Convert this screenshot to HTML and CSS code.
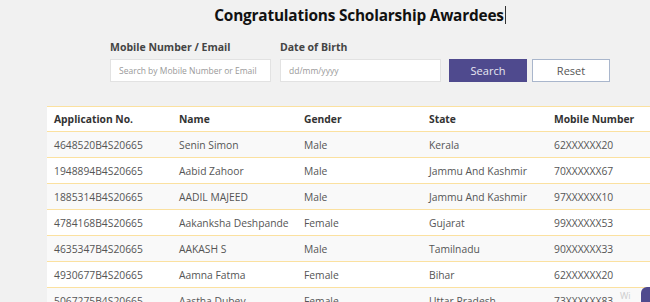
FILE: index.html
```html
<!DOCTYPE html>
<html>
<head>
<meta charset="utf-8">
<link rel="stylesheet" href="styles.css">
</head>
<body>
<div class="page">
  <h1 class="title">Congratulations Scholarship Awardees<span class="caret"></span></h1>
  <div class="filters">
    <div class="field">
      <label class="label">Mobile Number / Email</label>
      <input class="input" type="text" placeholder="Search by Mobile Number or Email">
    </div>
    <div class="field">
      <label class="label">Date of Birth</label>
      <input class="input" type="text" placeholder="dd/mm/yyyy">
    </div>
    <div class="buttons">
      <button class="btn btn-search">Search</button>
      <button class="btn btn-reset">Reset</button>
    </div>
  </div>
  <table class="table">
    <thead>
      <tr><th>Application No.</th><th>Name</th><th>Gender</th><th>State</th><th>Mobile Number</th></tr>
    </thead>
    <tbody>
      <tr><td>4648520B4S20665</td><td>Senin Simon</td><td>Male</td><td>Kerala</td><td>62XXXXXX20</td></tr>
      <tr><td>1948894B4S20665</td><td>Aabid Zahoor</td><td>Male</td><td>Jammu And Kashmir</td><td>70XXXXXX67</td></tr>
      <tr><td>1885314B4S20665</td><td>AADIL MAJEED</td><td>Male</td><td>Jammu And Kashmir</td><td>97XXXXXX10</td></tr>
      <tr><td>4784168B4S20665</td><td>Aakanksha Deshpande</td><td>Female</td><td>Gujarat</td><td>99XXXXXX53</td></tr>
      <tr><td>4635347B4S20665</td><td>AAKASH S</td><td>Male</td><td>Tamilnadu</td><td>90XXXXXX33</td></tr>
      <tr><td>4930677B4S20665</td><td>Aamna Fatma</td><td>Female</td><td>Bihar</td><td>62XXXXXX20</td></tr>
      <tr><td>5067275B4S20665</td><td>Aastha Dubey</td><td>Female</td><td>Uttar Pradesh</td><td>73XXXXXX83</td></tr>
    </tbody>
  </table>
</div>
<div class="widget-hint">Wi</div>
<div class="widget"></div>
</body>
</html>
```
FILE: styles.css
```css
html, body {
  margin: 0;
  padding: 0;
  background: #f1f1f1;
  overflow: hidden;
  width: 650px;
  height: 302px;
  font-family: "Open Sans", "Liberation Sans", sans-serif;
}
.page {
  padding-top: 4px;
  padding-left: 47px;
}
.title {
  margin: 0;
  box-sizing: border-box;
  text-align: center;
  width: 603px;
  padding-left: 23px;
  font-size: 15.4px;
  font-weight: 700;
  letter-spacing: -0.2px;
  color: #111;
  line-height: 24px;
  height: 24px;
}
.caret {
  display: inline-block;
  width: 1px;
  height: 18px;
  background: #333;
  vertical-align: -3px;
  margin-left: 1px;
}
.filters {
  display: flex;
  align-items: flex-end;
  margin-left: 63px;
  margin-top: 12px;
  gap: 9px;
}
.field {
  display: flex;
  flex-direction: column;
  gap: 5px;
}
.label {
  font-size: 10.5px;
  font-weight: 700;
  color: #444;
  line-height: 14px;
}
.input {
  box-sizing: border-box;
  width: 161px;
  height: 23px;
  border: 1px solid #e2e2e2;
  background: #fff;
  padding: 0 8px;
  font-family: inherit;
  font-size: 8.5px;
  outline: none;
}
.input::placeholder { color: #999; }
.buttons {
  display: flex;
  gap: 5px;
  margin-left: -1px;
}
.btn {
  box-sizing: border-box;
  width: 78px;
  height: 23px;
  font-family: inherit;
  font-size: 11px;
  padding: 0;
  cursor: pointer;
}
.btn-search {
  background: #4f4a8e;
  color: #e8e8f2;
  border: 1px solid #4f4a8e;
}
.btn-reset {
  background: #fff;
  color: #555;
  border: 1px solid #a9b6cc;
}
.table {
  margin-top: 24px;
  border-collapse: collapse;
  width: 625px;
  table-layout: fixed;
  font-size: 10.3px;
}
.table th, .table td {
  text-align: left;
  padding: 0 7px;
  height: 25px;
  border-top: 1px solid #fbe1a0;
  white-space: nowrap;
}
.table th {
  height: 24px;
  font-weight: 700;
  color: #333;
  background: #fff;
  border-bottom: 1px solid #fbe1a0;
}
.table td { color: #555; }
.table tbody tr:nth-child(odd) td { background: #f9f9f9; }
.table tbody tr:nth-child(even) td { background: #fff; }
.widget {
  position: absolute;
  left: 641px;
  top: 287px;
  width: 22px;
  height: 22px;
  border-radius: 6px;
  background: #4f4a8e;
}
.widget-hint {
  position: absolute;
  left: 620px;
  top: 289px;
  font-size: 9px;
  color: #ccc;
}
```
